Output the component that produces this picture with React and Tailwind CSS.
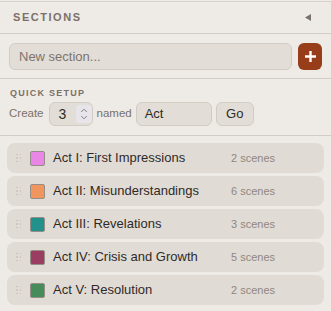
import React from 'react'

const sections = [
  { title: 'Act I: First Impressions', scenes: 2, color: 'bg-[#ea86e6]' },
  { title: 'Act II: Misunderstandings', scenes: 6, color: 'bg-[#f0955d]' },
  { title: 'Act III: Revelations', scenes: 3, color: 'bg-[#22918b]' },
  { title: 'Act IV: Crisis and Growth', scenes: 5, color: 'bg-[#9b3d60]' },
  { title: 'Act V: Resolution', scenes: 2, color: 'bg-[#468b5a]' },
]

const Handle = () => (
  <div className="grid grid-cols-2 gap-x-[2px] gap-y-[2px] w-[5px]">
    {[0, 1, 2, 3, 4, 5].map((i) => (
      <span key={i} className="w-[1.5px] h-[1.5px] bg-[#c9c1b9] rounded-full"></span>
    ))}
  </div>
)

const App = () => {
  return (
    <div className="w-[332px] h-[311px] bg-[#eeeae5] pt-px overflow-hidden font-['Liberation_Sans',Arial,sans-serif]">
      <div className="h-full flex flex-col border-t border-r border-[#d8d2cb]">
        <div className="h-[32px] shrink-0 flex items-center justify-between pl-[13px] pr-[20px] border-b border-[#d3ccc5]">
          <span className="text-[11px] font-bold tracking-[0.14em] text-[#7b716a] leading-none">SECTIONS</span>
          <svg width="6" height="7" viewBox="0 0 6 7">
            <polygon points="6,0 6,7 0,3.5" fill="#7b716a" />
          </svg>
        </div>

        <div className="shrink-0 flex gap-[6px] px-[9px] pt-[9px] pb-[8px] border-b border-[#d3ccc5]">
          <div className="flex-1 h-[27px] flex items-center px-[9px] rounded-md bg-[#e2ddd7] border border-[#d2ccc5] text-[13px] text-[#7d746c]">
            New section...
          </div>
          <button className="w-[24px] h-[27px] rounded-md bg-[#973d1a] flex items-center justify-center">
            <svg width="11" height="11" viewBox="0 0 11 11">
              <path d="M5.5 1v9M1 5.5h9" stroke="#fff" strokeWidth="2.4" strokeLinecap="square" />
            </svg>
          </button>
        </div>

        <div className="shrink-0 px-[9px] pt-[8px] pb-[9px] border-b border-[#d3ccc5]">
          <div className="text-[9px] font-bold tracking-[0.14em] text-[#7b716a] leading-[12px] mb-[3px] pl-px">QUICK SETUP</div>
          <div className="flex items-center h-[24px] text-[11.5px] text-[#7b716a]">
            <span>Create</span>
            <div className="ml-[5px] w-[44px] h-[24px] flex items-center rounded-md bg-[#e2ddd7] border border-[#d2ccc5] pl-[9px] text-[14px] text-[#2f2a26]">
              <span className="w-[9px]">3</span>
              <div className="ml-[8px] w-[16px] h-[18px] bg-[#e7e5ea] rounded-[3px] flex items-center justify-center">
                <svg width="8" height="14" viewBox="0 0 8 14">
                  <path d="M1.2 5l2.8-2.8 2.8 2.8M1.2 9l2.8 2.8 2.8-2.8" fill="none" stroke="#7a757b" strokeWidth="0.9" />
                </svg>
              </div>
            </div>
            <span className="ml-[4px]">named</span>
            <div className="ml-[4px] w-[76px] h-[24px] flex items-center rounded-md bg-[#e2ddd7] border border-[#d2ccc5] pl-[8px] text-[13px] text-[#2f2a26]">
              Act
            </div>
            <button className="ml-[4px] w-[38px] h-[24px] flex items-center justify-center rounded-md bg-[#e2ddd7] border border-[#d2ccc5] text-[13px] text-[#2f2a26]">
              Go
            </button>
          </div>
        </div>

        <div className="flex flex-col gap-[3px] px-[7px] pt-[7px]">
          {sections.map((s) => (
            <div key={s.title} className="h-[30px] flex items-center rounded-lg bg-[#e1dbd5] pl-[9px]">
              <Handle />
              <span className={`ml-[9px] w-[15px] h-[15px] rounded-[2px] border-[1.5px] border-[#958d86] ${s.color}`}></span>
              <span className="ml-[8px] w-[178px] shrink-0 text-[13px] text-[#2f2a26] whitespace-nowrap">{s.title}</span>
              <span className="text-[11px] text-[#8f8780]">{s.scenes} scenes</span>
            </div>
          ))}
        </div>
      </div>
    </div>
  )
}

export default App
